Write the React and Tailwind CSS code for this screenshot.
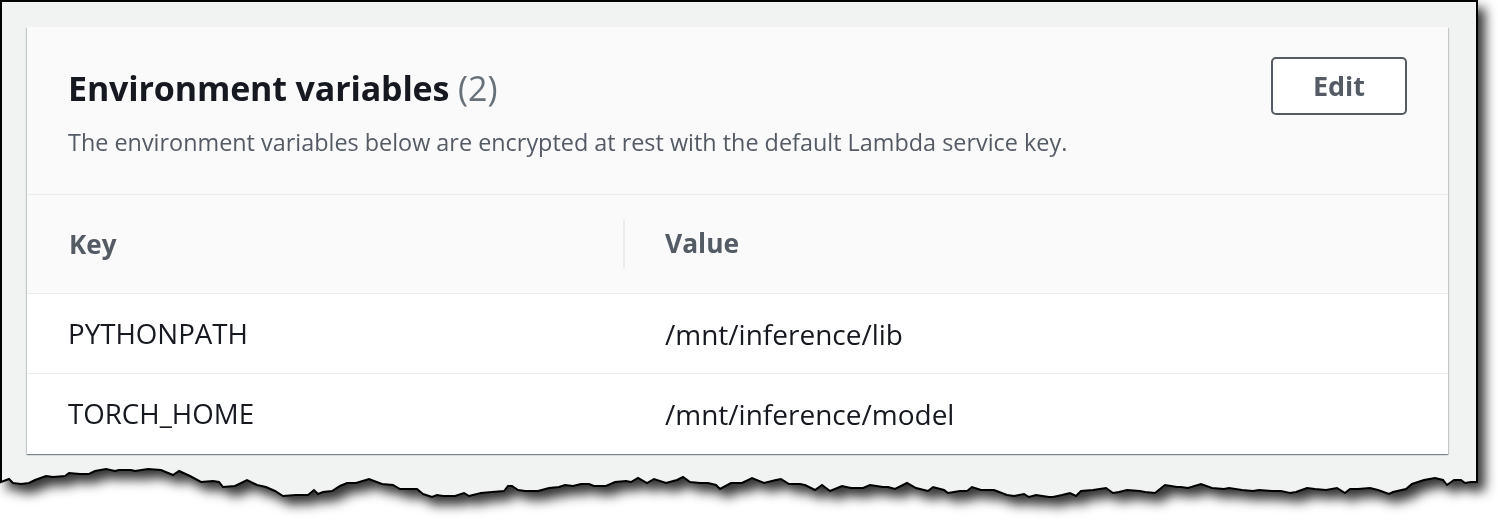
import React from 'react';

// jagged torn-paper edge, fixed seed so it never changes between renders
function tornPath(width) {
  let seed = 11;
  const rnd = () => {
    seed = (seed * 16807) % 2147483647;
    return seed / 2147483647;
  };
  const pts = [];
  let y = 28;
  for (let x = 0; x <= width; x += 4 + Math.floor(rnd() * 10)) {
    y += (rnd() - 0.5) * 11;
    if (y < 9) y = 9 + rnd() * 3;
    if (y > 38) y = 38 - rnd() * 3;
    pts.push([x, Math.round(y)]);
  }
  pts.push([width, Math.round(y)]);
  return pts;
}

const W = 1478;
const EDGE = tornPath(W - 2);

function TornBottom() {
  const first = EDGE[0];
  const last = EDGE[EDGE.length - 1];
  const jag = EDGE.map(([x, y]) => `${x + 1},${y}`).join(' L');
  const fill = `M0,0 L${W},0 L${W},${last[1]} L${jag.split(' L').reverse().join(' L')} L0,${first[1]} Z`;
  const line = `M1,0 L1,${first[1]} L${jag} L${W - 1},${last[1]} L${W - 1},0`;
  return (
    <svg width={W} height="46" viewBox={`0 0 ${W} 46`} className="block">
      <path d={fill} fill="#f1f2f2" />
      <path d={line} fill="none" stroke="#000" strokeWidth="2" strokeLinejoin="miter" />
    </svg>
  );
}

const rows = [
  { key: 'PYTHONPATH', value: '/mnt/inference/lib' },
  { key: 'TORCH_HOME', value: '/mnt/inference/model' },
];

export default function App() {
  return (
    <div className="w-[1498px] h-[526px] bg-white overflow-hidden" style={{ fontFamily: '"Open Sans", Arial, sans-serif' }}>
      <div className="w-[1478px] drop-shadow-[7px_8px_6px_rgba(0,0,0,0.8)]">
        <div className="bg-[#f1f2f2] border-x-2 border-t-2 border-black pl-[25px] pr-[28px] pt-[25px] pb-[5px]">
          {/* Card */}
          <div className="bg-white shadow-[0_1px_1px_0_rgba(0,28,36,0.3),1px_1px_1px_0_rgba(0,28,36,0.15),-1px_1px_1px_0_rgba(0,28,36,0.15)]">
            {/* Header */}
            <div className="bg-[#fafafa] border-b border-[#eaeded] px-[41px] pt-[30px] pb-[38px]">
              <div className="flex items-center justify-between h-[58px]">
                <h2 className="text-[34px] font-bold text-[#16191f] leading-[58px] pt-[3px] tracking-[-0.15px]">
                  Environment variables <span className="font-normal text-[#687078] tracking-normal">(2)</span>
                </h2>
                <button className="w-[136px] h-[58px] rounded-[5px] border-2 border-[#545b64] bg-white text-[#545b64] text-[27px] font-bold">
                  Edit
                </button>
              </div>
              <p className="mt-[13px] text-[23.4px] leading-[28px] text-[#545b64]">
                The environment variables below are encrypted at rest with the default Lambda service key.
              </p>
            </div>

            {/* Table header */}
            <div className="flex bg-[#fafafa] border-b border-[#eaeded] h-[99px] items-center">
              <div className="w-[596px] pl-[42px] text-[26px] font-bold text-[#545b64]">Key</div>
              <div className="w-[2px] h-[48px] bg-[#eaeded]" />
              <div className="pl-[40px] text-[26.4px] font-bold text-[#545b64]">Value</div>
            </div>

            {/* Rows */}
            {rows.map((r, i) => (
              <div
                key={r.key}
                className={`flex items-center h-[80px] text-[#16191f] ${i < rows.length - 1 ? 'border-b border-[#eaeded]' : ''}`}
              >
                <div className="w-[598px] pl-[41px] text-[27.7px]">{r.key}</div>
                <div className="pl-[40px] text-[28px]">{r.value}</div>
              </div>
            ))}
          </div>
        </div>
        <TornBottom />
      </div>
    </div>
  );
}
